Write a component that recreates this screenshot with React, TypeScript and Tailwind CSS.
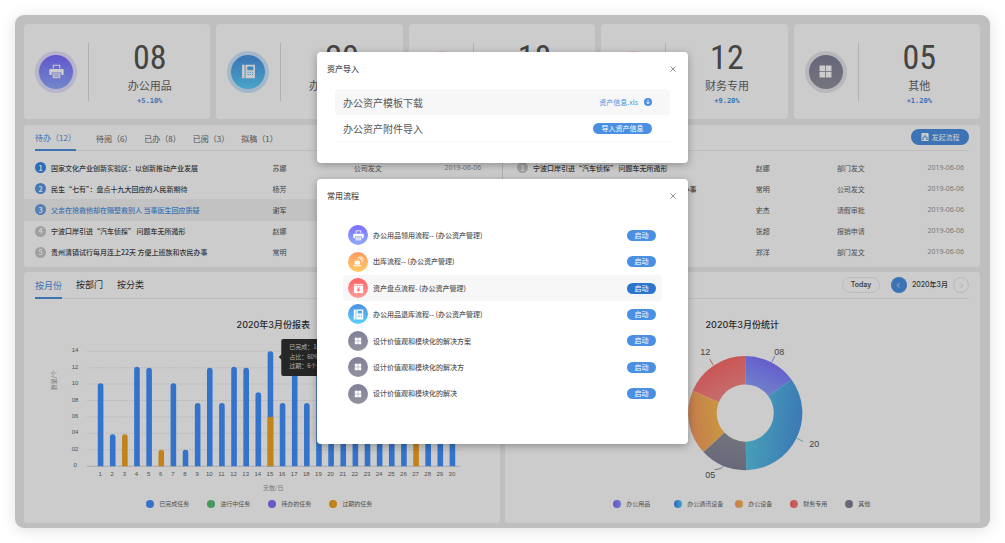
import React from "react";
import clsx from "clsx";

type IconName = "printer" | "phone" | "computer" | "money" | "grid";

const iconStyles: Record<IconName, { fill: string; ring: string }> = {
  printer: { fill: "from-[#7b6cff] to-[#8fa9ff]", ring: "bg-[#7b6cff]/20" },
  phone: { fill: "from-[#4a90e2] to-[#5bcffb]", ring: "bg-[#5bb0f8]/30" },
  computer: { fill: "from-[#ff9a62] to-[#ffca60]", ring: "bg-[#ff8a70]/25" },
  money: { fill: "from-[#ff6060] to-[#ff9a9a]", ring: "bg-[#ff6060]/20" },
  grid: { fill: "from-[#80809a] to-[#92929e]", ring: "bg-[#80809a]/20" },
};

const stats: { icon: IconName; count: string; name: string; rate: string }[] = [
  { icon: "printer", count: "08", name: "办公用品", rate: "+5.10%" },
  { icon: "phone", count: "20", name: "办公通讯设备", rate: "+3.60%" },
  { icon: "computer", count: "18", name: "办公设备", rate: "+2.40%" },
  { icon: "money", count: "12", name: "财务专用", rate: "+9.20%" },
  { icon: "grid", count: "05", name: "其他", rate: "+1.20%" },
];

const todoTabs = ["待办（12）", "待阅（6）", "已办（8）", "已阅（3）", "拟稿（1）"];

const leftTodos = [
  { title: "国家文化产业创新实验区：以创新推动产业发展", user: "苏娜", type: "公司发文" },
  { title: "民生“七有”：盘点十九大回应的人民新期待", user: "杨芳", type: "部门发文" },
  { title: "父亲在抢救他却在隔壁救别人 当事医生回应质疑", user: "谢军", type: "请假审批" },
  { title: "宁波口岸引进“汽车侦探” 问题车无所遁形", user: "赵娜", type: "报销申请" },
  { title: "贵州清镇试行每月连上22天 方便上班族和农民办事", user: "常明", type: "部门发文" },
];

const rightTodos = [
  { title: "宁波口岸引进“汽车侦探” 问题车无所遁形", user: "赵娜", type: "部门发文" },
  { title: "贵州清镇市试行每月连上22天 方便上班族和农民办事", user: "常明", type: "公司发文" },
  { title: "国家文化产业创新实验区", user: "史杰", type: "请假审批" },
  { title: "以创新推动产业发展", user: "张超", type: "报销申请" },
  { title: "盘点十九大回应的人民新期待", user: "郑洋", type: "部门发文" },
];

const flows: { icon: IconName; name: string; active?: boolean }[] = [
  { icon: "printer", name: "办公用品领用流程-- (办公资产管理)" },
  { icon: "computer", name: "出库流程-- (办公资产管理)" },
  { icon: "money", name: "资产盘点流程- (办公资产管理)", active: true },
  { icon: "phone", name: "办公用品退库流程-- (办公资产管理)" },
  { icon: "grid", name: "设计价值观和模块化的解决方案" },
  { icon: "grid", name: "设计价值观和模块化的解决方" },
  { icon: "grid", name: "设计价值观和模块化的解决" },
];

// [done, overdue] for every day of the month
const days = [
  [10.1, 0], [3.9, 0], [0, 3.9], [12.1, 0], [12, 0], [0, 2], [10.1, 0], [2, 0], [7.7, 0], [12, 0],
  [7.7, 0], [12.1, 0], [12, 0], [9, 0], [8, 6], [7.7, 0], [12, 0], [7.7, 0], [12, 0], [9, 0],
  [8, 0], [10, 0], [7, 0], [12, 0], [9, 0], [6, 0], [0, 6], [8, 0], [10, 0], [7, 0],
];

const barLegend = [
  { name: "已完成任务", color: "bg-[#4090fe]" },
  { name: "进行中任务", color: "bg-[#59bf75]" },
  { name: "待办的任务", color: "bg-[#8270fa]" },
  { name: "过期的任务", color: "bg-[#f3a323]" },
];

const pieLegend = [
  { name: "办公用品", color: "bg-linear-to-r from-[#7b6cff] to-[#8b95ff]", width: "w-[61px]" },
  { name: "办公通讯设备", color: "bg-linear-to-r from-[#4080e0] to-[#5bcffb]", width: "w-[61px]" },
  { name: "办公设备", color: "bg-linear-to-r from-[#ff9a62] to-[#f5b850]", width: "w-[55px]" },
  { name: "财务专用", color: "bg-linear-to-r from-[#ff6060] to-[#ff8080]", width: "w-[55px]" },
  { name: "其他", color: "bg-[#80809a]", width: "w-[22px]" },
];

const slices = [
  { from: 0, to: 54, fill: "url(#purple)" },
  { from: 54, to: 179, fill: "url(#blue)" },
  { from: 179, to: 227, fill: "url(#gray)" },
  { from: 227, to: 293, fill: "url(#orange)" },
  { from: 293, to: 360, fill: "url(#red)" },
];

function AssetIcon({ name, className }: { name: IconName; className?: string }) {
  return (
    <svg viewBox="0 0 20 20" className={className} fill="#fff" aria-hidden="true">
      {name === "printer" && (
        <>
          <path d="M5 1h10v5h-1.4V2.4H6.4V6H5z" />
          <path d="M2 6.8h16c.9 0 1.6.7 1.6 1.6v5c0 .9-.7 1.4-1.6 1.4h-1.6v-3.6H3.6v3.6H2c-.9 0-1.6-.5-1.6-1.4v-5c0-.9.7-1.6 1.6-1.6z" />
          <path d="M4.8 12.2h10.4V19H4.8z" opacity=".85" />
          <path d="M6.6 14.2h6.8M6.6 16.4h6.8" stroke="#8f9cf5" strokeWidth=".8" />
        </>
      )}
      {name === "phone" && (
        <>
          <path d="M1.4 1h3.4v18H1.4z" />
          <path
            fillRule="evenodd"
            d="M6 1h12.6v18H6zM8.4 3.4v4.8h8V3.4zM8.6 10.4v1.4h1.6v-1.4zm3 0v1.4h1.6v-1.4zm3 0v1.4h1.6v-1.4zm-6 3v1.4h1.6v-1.4zm3 0v1.4h1.6v-1.4zm3 0v1.4h1.6v-1.4z"
          />
        </>
      )}
      {name === "computer" && (
        <>
          <path d="M3 8.6h9.6v6.8H3zM.6 16.6H15v2H.6z" />
          <path
            d="M8.4 6.4A5.2 5.2 0 1 1 14.6 12M10.8 2.6c3 .6 5 2.6 6.2 6.8M17.6 3.6c-2 .2-3.6 1.2-5 3.4"
            fill="none"
            stroke="#fff"
            strokeWidth="1.3"
          />
        </>
      )}
      {name === "money" && (
        <>
          <path d="M1.6 1.6h16.8v3H1.6z" opacity=".85" />
          <path d="M1.6 5.6h16.8v12.8H1.6z" />
          <path
            d="M7.4 7.6l2.6 3.2 2.6-3.2M7.2 11.4h5.6M7.2 13.6h5.6M10 10.8v5.4"
            fill="none"
            stroke="#ff6a6a"
            strokeWidth="1.3"
          />
        </>
      )}
      {name === "grid" && <path d="M2 2h7.5v7.5H2zM10.5 2H18v7.5h-7.5zM2 10.5h7.5V18H2zM10.5 10.5H18V18h-7.5z" />}
    </svg>
  );
}

function StatCard({ icon, count, name, rate }: (typeof stats)[number]) {
  return (
    <div className="flex h-[95px] items-center rounded-[4px] bg-white pl-[11px]">
      <div className={clsx("flex size-[42px] items-center justify-center rounded-full", iconStyles[icon].ring)}>
        <div
          className={clsx(
            "flex size-[34px] items-center justify-center rounded-full bg-linear-to-b",
            iconStyles[icon].fill
          )}
        >
          <AssetIcon name={icon} className="size-[15px]" />
        </div>
      </div>
      <div className="ml-[11px] h-[58px] w-px bg-[#dcdcdc]" />
      <div className="flex flex-1 flex-col items-center">
        <span className="font-['Liberation_Sans_Narrow','Roboto_Condensed','Noto_Sans_CJK_SC',sans-serif] text-[34px] leading-10 text-[#555]">
          {count}
        </span>
        <span className="text-[11px] leading-4 text-[#666]">{name}</span>
        <span className="mt-0.5 font-['DejaVu_Sans_Mono',monospace] text-[7px] leading-3 font-bold text-[#4a90e2]">
          {rate}
        </span>
      </div>
    </div>
  );
}

const badgeColors = ["bg-[#3a87e8]", "bg-[#5596e6]", "bg-[#69a0e4]", "bg-[#c8c8c8]", "bg-[#c8c8c8]"];

function TodoTable({ rows, active, muted }: { rows: typeof leftTodos; active?: number; muted?: boolean }) {
  return (
    <table className="h-[106px] w-full table-fixed text-left text-[7px] leading-[10px]">
      <tbody>
        {rows.map((row, i) => (
          <tr key={row.title} className={clsx(i === active && "bg-[#f3f3f3]")}>
            <td className={muted ? "w-[53%] pl-[14px]" : "w-[52%] pl-[11px]"}>
              <div className="flex items-center gap-[5px] whitespace-nowrap">
                <span
                  className={clsx(
                    "flex size-[11px] shrink-0 items-center justify-center rounded-full font-bold text-white",
                    muted ? "bg-[#c8c8c8]" : badgeColors[i]
                  )}
                >
                  {i + 1}
                </span>
                <span className={clsx("font-medium", i === active ? "text-[#4a90e2]" : "text-[#444]")}>
                  {row.title}
                </span>
              </div>
            </td>
            <td className="w-[17%] text-[#555]">{row.user}</td>
            <td className="w-[19%] text-[#666]">{row.type}</td>
            <td className="font-['Noto_Sans',sans-serif] whitespace-nowrap text-[#999]">2019-06-06</td>
          </tr>
        ))}
      </tbody>
    </table>
  );
}

function BarChart() {
  const base = 167;
  const unit = 8.2;

  return (
    <svg viewBox="0 0 475 196" className="w-full" role="img" aria-label="2020年3月份报表">
      <text x="249" y="29" textAnchor="middle" className="fill-[#333] font-['Inter','Noto_Sans_CJK_SC',sans-serif] text-[9px] font-medium">
        2020年3月份报表
      </text>
      <g className="fill-[#666] font-['Liberation_Sans',sans-serif] text-[6px]">
        {[0, 2, 4, 6, 8, 10, 12, 14].map((n) => (
          <g key={n}>
            <text x="51" y={base + 1 - n * unit} textAnchor="middle">
              {n ? String(n).padStart(2, "0") : "0"}
            </text>
            <path
              d={`M63 ${base - n * unit}H436`}
              stroke={n ? "#eaeaea" : "#d4d4d4"}
              strokeDasharray={n ? "2 1" : undefined}
            />
          </g>
        ))}
        {days.map(([done, late], i) => {
          const x = 76.5 + i * 12.12;
          const top = base - (done + late) * unit;
          return (
            <g key={i}>
              <path
                d={`M${x - 2.8} ${base}V${top + 2.8}a2.8 2.8 0 0 1 5.6 0V${base}z`}
                fill={done ? "#4090fe" : "#f3a323"}
              />
              {done > 0 && late > 0 && (
                <rect x={x - 2.8} y={base - late * unit} width="5.6" height={late * unit} fill="#f3a323" />
              )}
              <text x={x - 0.5} y="177" textAnchor="middle">
                {i + 1}
              </text>
            </g>
          );
        })}
      </g>
      <g className="fill-[#999] text-[6px]" textAnchor="middle">
        <text x="249" y="191">天数/日</text>
        <text transform="translate(32 81) rotate(-90)">数量/个</text>
      </g>
      <rect x="257" y="40" width="52" height="37" rx="2" fill="#303030" />
      <path d="M257.500 55l-3 3 3 3z" fill="#303030" />
      <g className="fill-[#ddd] text-[6px]">
        <text x="265" y="50">已完成：14个</text>
        <text x="265" y="60">占比：60%</text>
        <text x="265" y="69">过期：6个</text>
      </g>
    </svg>
  );
}

function slicePath(from: number, to: number) {
  const point = (r: number, deg: number) => {
    const a = (deg * Math.PI) / 180;
    return `${240 + r * Math.sin(a)} ${114 - r * Math.cos(a)}`;
  };
  const large = to - from > 180 ? 1 : 0;
  return `M${point(57, from)}A57 57 0 ${large} 1 ${point(57, to)}L${point(28.5, to)}A28.5 28.5 0 ${large} 0 ${point(28.5, from)}z`;
}

function PieChart() {
  return (
    <svg viewBox="0 0 475 196" className="w-full" role="img" aria-label="2020年3月份统计">
      <defs>
        <linearGradient id="purple" x1=".7" y1="0" x2=".2" y2="1">
          <stop stopColor="#7b6cff" />
          <stop offset="1" stopColor="#8fa9ff" />
        </linearGradient>
        <linearGradient id="blue" x1="1" y1=".6" x2="0" y2=".4">
          <stop stopColor="#4a96e2" />
          <stop offset="1" stopColor="#5bcbe8" />
        </linearGradient>
        <linearGradient id="gray" x1=".3" y1="1" x2=".6" y2="0">
          <stop stopColor="#80809a" />
          <stop offset="1" stopColor="#92929e" />
        </linearGradient>
        <linearGradient id="orange" x1="0" y1=".6" x2="1" y2=".4">
          <stop stopColor="#f79a62" />
          <stop offset="1" stopColor="#fcc050" />
        </linearGradient>
        <linearGradient id="red" x1=".2" y1="0" x2=".8" y2="1">
          <stop stopColor="#ff6060" />
          <stop offset="1" stopColor="#f79090" />
        </linearGradient>
      </defs>
      <text x="237" y="29" textAnchor="middle" className="fill-[#333] font-['Inter','Noto_Sans_CJK_SC',sans-serif] text-[9px] font-medium">
        2020年3月份统计
      </text>
      {slices.map((s) => (
        <path key={s.from} d={slicePath(s.from, s.to)} fill={s.fill} />
      ))}
      <g fill="none" strokeWidth=".8">
        <path d="M266.500 63l3-6" stroke="#5b86e0" />
        <path d="M291.500 139l6.500 3.500" stroke="#5ec5b4" />
        <path d="M208 66l-3.500-6" stroke="#e25555" />
        <path d="M218 167q-2 3-8.500 3.500" stroke="#667788" />
      </g>
      <g className="fill-[#555] font-['Liberation_Sans',sans-serif] text-[9px]" textAnchor="middle">
        <text x="274" y="56">08</text>
        <text x="309" y="148">20</text>
        <text x="200" y="56">12</text>
        <text x="205" y="179">05</text>
      </g>
    </svg>
  );
}

function Modal({ title, className, children }: { title: string; className: string; children: React.ReactNode }) {
  return (
    <section
      role="dialog"
      aria-label={title}
      className={clsx("w-[371px] rounded-[4px] bg-white shadow-[0_2px_8px_rgba(0,0,0,0.3)]", className)}
    >
      <header className="flex h-[34px] items-center justify-between pr-[11px] pl-[10px]">
        <h2 className="text-[8px] font-medium text-[#555]">{title}</h2>
        <button type="button" aria-label="关闭" className="p-px">
          <svg viewBox="0 0 8 8" className="size-[6px]" fill="none" stroke="#888" strokeWidth="1.2">
            <path d="M.5.500l7 7M7.500.500l-7 7" />
          </svg>
        </button>
      </header>
      {children}
    </section>
  );
}

const App: React.FC = () => {
  return (
    <div className="bg-white p-[15px] font-['Noto_Sans_CJK_SC',sans-serif]" lang="zh-CN">
      <div className="relative rounded-[9px] bg-[#efefef] pt-[9px] pr-[10px] pb-[5px] pl-[9px] shadow-[0_2px_16px_rgba(0,0,0,0.12)]">
        <div className="grid grid-cols-5 gap-[6px]">
          {stats.map((item) => (
            <StatCard key={item.name} {...item} />
          ))}
        </div>

        <section className="mt-[6px] rounded-[3px] bg-white pb-[4px]">
          <div className="mx-[11px] flex h-[26px] justify-between border-b border-[#ededed]">
            <nav className="flex text-[8px]">
              {todoTabs.map((tab, i) => (
                <button
                  key={tab}
                  type="button"
                  className={clsx(
                    "h-[26px] pt-[2px] text-left whitespace-nowrap",
                    i === 0 ? "mr-[20px] border-b-2 border-[#4a90e2] text-[#4a90e2]" : "mr-[12px] text-[#666]"
                  )}
                >
                  {tab}
                </button>
              ))}
            </nav>
            <button
              type="button"
              className="mt-[4px] flex h-[16px] w-[58px] items-center justify-center gap-[3px] rounded-full bg-[#4a90e2] text-[7px] text-white"
            >
              <svg viewBox="0 0 10 10" className="size-[8px]" aria-hidden="true">
                <rect x=".5" y="0" width="9" height="10" rx="1" fill="#fff" />
                <path d="M5 2v3M2.500 8V5h5v3M1.500 8h2M6.500 8h2" stroke="#4a90e2" fill="none" />
              </svg>
              发起流程
            </button>
          </div>
          <div className="mt-[6px] grid grid-cols-2">
            <TodoTable rows={leftTodos} active={2} />
            <div className="border-l border-[#dcdcdc]">
              <TodoTable rows={rightTodos} muted />
            </div>
          </div>
        </section>

        <div className="mt-[5px] grid grid-cols-2 gap-[5px]">
          <section className="h-[251px] rounded-[3px] bg-white">
            <nav className="ml-[11px] flex h-[27px] gap-[14px] border-b border-[#ededed] text-[9px]">
              <button type="button" className="h-[27px] border-b-2 border-[#4a90e2] pt-[2px] text-[#4a90e2]">
                按月份
              </button>
              <button type="button" className="text-[#333]">按部门</button>
              <button type="button" className="text-[#333]">按分类</button>
            </nav>
            <BarChart />
            <ul className="flex justify-center pl-[13px] text-[6px] leading-[18px] text-[#666]">
              {barLegend.map((item) => (
                <li key={item.name} className="flex w-[61px] items-center gap-[5px]">
                  <span className={clsx("size-[8px] rounded-full", item.color)} />
                  {item.name}
                </li>
              ))}
            </ul>
          </section>

          <section className="h-[251px] rounded-[3px] bg-white">
            <div className="mr-[11px] flex h-[27px] items-center justify-end border-b border-[#ededed] font-['Inter','Noto_Sans_CJK_SC',sans-serif] text-[7px] font-medium text-[#444]">
              <button type="button" className="h-[16px] w-[38px] rounded-full border border-[#ececec]">
                Today
              </button>
              <button
                type="button"
                aria-label="上个月"
                className="ml-[11px] flex size-[16px] items-center justify-center rounded-full bg-[#4a90e2]"
              >
                <svg viewBox="0 0 6 6" className="size-[5px]" fill="none" stroke="#fff">
                  <path d="M4 .500L1.500 3L4 5.500" />
                </svg>
              </button>
              <span className="mx-[5px]">2020年3月</span>
              <button
                type="button"
                aria-label="下个月"
                className="flex size-[16px] items-center justify-center rounded-full border border-[#e8e8e8]"
              >
                <svg viewBox="0 0 6 6" className="size-[5px]" fill="none" stroke="#ccc">
                  <path d="M2 .500L4.500 3L2 5.500" />
                </svg>
              </button>
            </div>
            <PieChart />
            <ul className="flex justify-center pr-[4px] text-[6px] leading-[18px] text-[#666]">
              {pieLegend.map((item) => (
                <li key={item.name} className={clsx("flex items-center gap-[5px] whitespace-nowrap", item.width)}>
                  <span className={clsx("size-[8px] shrink-0 rounded-full", item.color)} />
                  {item.name}
                </li>
              ))}
            </ul>
          </section>
        </div>

        <div className="absolute inset-0 flex flex-col items-center gap-[16px] rounded-[9px] bg-black/20 pt-[37px]">
          <Modal title="资产导入" className="pb-[21px]">
            <div className="mx-[18px] mt-[3px] text-[10px] text-[#555]">
              <div className="flex h-[26px] items-center justify-between rounded-[4px] bg-[#f7f7f7] pr-[18px] pl-[8px]">
                办公资产模板下载
                <a href="#" className="flex items-center gap-[6px] text-[7px] text-[#4a90e2]">
                  资产信息.xls
                  <svg viewBox="0 0 10 10" className="size-[8px]" fill="none" aria-hidden="true">
                    <circle cx="5" cy="5" r="5" fill="#4a90e2" />
                    <path d="M5 2.200v5M2.800 5.200L5 7.400l2.200-2.200" stroke="#fff" />
                  </svg>
                </a>
              </div>
              <div className="flex h-[27px] items-center justify-between border-b border-[#f8f8f8] pr-[18px] pl-[8px]">
                办公资产附件导入
                <button type="button" className="h-[11px] w-[59px] rounded-full bg-[#4a90e2] text-[7px] leading-[11px] text-white">
                  导入资产信息
                </button>
              </div>
            </div>
          </Modal>

          <Modal title="常用流程" className="pb-[37px]">
            <ul className="mx-[26px] mt-[9px] flex h-[185px] flex-col text-[7px] text-[#555]">
              {flows.map((flow) => (
                <li
                  key={flow.name}
                  className={clsx("flex flex-1 items-center rounded-[4px] pr-[6px] pl-[5px]", flow.active && "bg-[#f7f7f7]")}
                >
                  <span
                    className={clsx(
                      "flex size-[20px] items-center justify-center rounded-full bg-linear-to-b",
                      iconStyles[flow.icon].fill
                    )}
                  >
                    <AssetIcon name={flow.icon} className={flow.icon === "grid" ? "size-[8px]" : "size-[11px]"} />
                  </span>
                  <span className="ml-[5px] flex-1 font-medium">{flow.name}</span>
                  <button
                    type="button"
                    className={clsx(
                      "h-[11px] w-[29px] rounded-full leading-[11px] text-white",
                      flow.active ? "bg-[#2b76cc]" : "bg-[#4a90e2]"
                    )}
                  >
                    启动
                  </button>
                </li>
              ))}
            </ul>
          </Modal>
        </div>
      </div>
    </div>
  );
};

export default App;
